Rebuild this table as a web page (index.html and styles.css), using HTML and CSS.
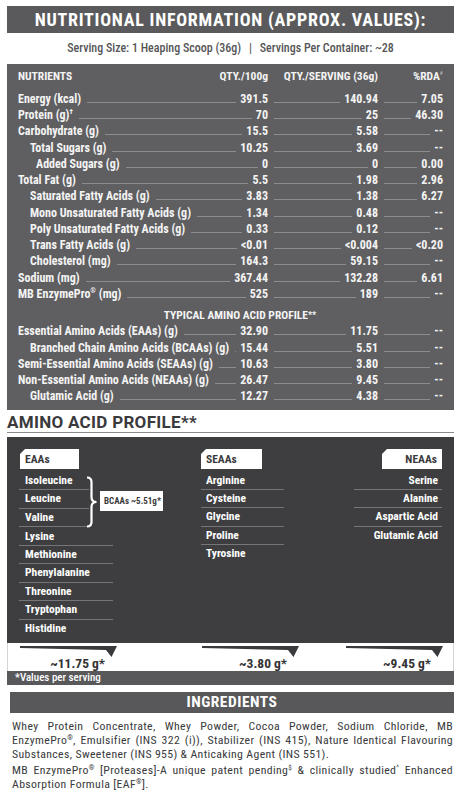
FILE: index.html
```html
<!DOCTYPE html>
<html>
<head>
<meta charset="utf-8">
<link rel="stylesheet" href="styles.css">
</head>
<body>
<div class="page">
  <h1 class="title-bar">NUTRITIONAL INFORMATION (APPROX. VALUES):</h1>
  <p class="serving">Serving Size: 1 Heaping Scoop (36g) <span class="sep">|</span> Servings Per Container: ~28</p>

  <section class="nut">
    <div class="nut-head">
      <span class="h1c">NUTRIENTS</span><span class="h1c r">QTY./100g</span>
      <span class="r">QTY./SERVING (36g)</span>
      <span class="r">%RDA<sup class="hash">#</sup></span>
    </div>
    <div class="row"><div class="cell"><span class="lbl">Energy (kcal)</span><i class="lead"></i><span class="val">391.5</span></div><div class="cell"><i class="lead"></i><span class="val">140.94</span></div><div class="cell"><i class="lead"></i><span class="val">7.05</span></div></div>
    <div class="row"><div class="cell"><span class="lbl">Protein (g)<sup class="dag">†</sup></span><i class="lead"></i><span class="val">70</span></div><div class="cell"><i class="lead"></i><span class="val">25</span></div><div class="cell"><i class="lead"></i><span class="val">46.30</span></div></div>
    <div class="row"><div class="cell"><span class="lbl">Carbohydrate (g)</span><i class="lead"></i><span class="val">15.5</span></div><div class="cell"><i class="lead"></i><span class="val">5.58</span></div><div class="cell"><i class="lead"></i><span class="val">--</span></div></div>
    <div class="row"><div class="cell"><span class="lbl i1">Total Sugars (g)</span><i class="lead"></i><span class="val">10.25</span></div><div class="cell"><i class="lead"></i><span class="val">3.69</span></div><div class="cell"><i class="lead"></i><span class="val">--</span></div></div>
    <div class="row"><div class="cell"><span class="lbl i2">Added Sugars (g)</span><i class="lead"></i><span class="val">0</span></div><div class="cell"><i class="lead"></i><span class="val">0</span></div><div class="cell"><i class="lead"></i><span class="val">0.00</span></div></div>
    <div class="row"><div class="cell"><span class="lbl">Total Fat (g)</span><i class="lead"></i><span class="val">5.5</span></div><div class="cell"><i class="lead"></i><span class="val">1.98</span></div><div class="cell"><i class="lead"></i><span class="val">2.96</span></div></div>
    <div class="row"><div class="cell"><span class="lbl i1">Saturated Fatty Acids (g)</span><i class="lead"></i><span class="val">3.83</span></div><div class="cell"><i class="lead"></i><span class="val">1.38</span></div><div class="cell"><i class="lead"></i><span class="val">6.27</span></div></div>
    <div class="row"><div class="cell"><span class="lbl i1">Mono Unsaturated Fatty Acids (g)</span><i class="lead"></i><span class="val">1.34</span></div><div class="cell"><i class="lead"></i><span class="val">0.48</span></div><div class="cell"><i class="lead"></i><span class="val">--</span></div></div>
    <div class="row"><div class="cell"><span class="lbl i1">Poly Unsaturated Fatty Acids (g)</span><i class="lead"></i><span class="val">0.33</span></div><div class="cell"><i class="lead"></i><span class="val">0.12</span></div><div class="cell"><i class="lead"></i><span class="val">--</span></div></div>
    <div class="row"><div class="cell"><span class="lbl i1">Trans Fatty Acids (g)</span><i class="lead"></i><span class="val">&lt;0.01</span></div><div class="cell"><i class="lead"></i><span class="val">&lt;0.004</span></div><div class="cell"><i class="lead"></i><span class="val">&lt;0.20</span></div></div>
    <div class="row"><div class="cell"><span class="lbl i1">Cholesterol (mg)</span><i class="lead"></i><span class="val">164.3</span></div><div class="cell"><i class="lead"></i><span class="val">59.15</span></div><div class="cell"><i class="lead"></i><span class="val">--</span></div></div>
    <div class="row"><div class="cell"><span class="lbl">Sodium (mg)</span><i class="lead"></i><span class="val">367.44</span></div><div class="cell"><i class="lead"></i><span class="val">132.28</span></div><div class="cell"><i class="lead"></i><span class="val">6.61</span></div></div>
    <div class="row"><div class="cell"><span class="lbl">MB EnzymePro<sup class="reg">®</sup> (mg)</span><i class="lead"></i><span class="val">525</span></div><div class="cell"><i class="lead"></i><span class="val">189</span></div><div class="cell"><i class="lead"></i><span class="val">--</span></div></div>

    <div class="sub-head">TYPICAL AMINO ACID PROFILE<span class="stars">**</span></div>

    <div class="row"><div class="cell"><span class="lbl">Essential Amino Acids (EAAs) (g)</span><i class="lead"></i><span class="val">32.90</span></div><div class="cell"><i class="lead"></i><span class="val">11.75</span></div><div class="cell"><i class="lead"></i><span class="val">--</span></div></div>
    <div class="row"><div class="cell"><span class="lbl i1">Branched Chain Amino Acids (BCAAs) (g)</span><i class="lead"></i><span class="val">15.44</span></div><div class="cell"><i class="lead"></i><span class="val">5.51</span></div><div class="cell"><i class="lead"></i><span class="val">--</span></div></div>
    <div class="row"><div class="cell"><span class="lbl">Semi-Essential Amino Acids (SEAAs) (g)</span><i class="lead"></i><span class="val">10.63</span></div><div class="cell"><i class="lead"></i><span class="val">3.80</span></div><div class="cell"><i class="lead"></i><span class="val">--</span></div></div>
    <div class="row"><div class="cell"><span class="lbl">Non-Essential Amino Acids (NEAAs) (g)</span><i class="lead"></i><span class="val">26.47</span></div><div class="cell"><i class="lead"></i><span class="val">9.45</span></div><div class="cell"><i class="lead"></i><span class="val">--</span></div></div>
    <div class="row"><div class="cell"><span class="lbl i1">Glutamic Acid (g)</span><i class="lead"></i><span class="val">12.27</span></div><div class="cell"><i class="lead"></i><span class="val">4.38</span></div><div class="cell"><i class="lead"></i><span class="val">--</span></div></div>
  </section>

  <h2 class="aa-title">AMINO ACID PROFILE**</h2>

  <section class="aa-panel">
    <div class="col col-eaa">
      <div class="tag">EAAs</div>
      <div class="bcaa">
        <ul class="list short">
          <li>Isoleucine</li>
          <li>Leucine</li>
          <li>Valine</li>
        </ul>
        <svg class="brace" width="12" height="52" viewBox="0 0 12 52"><path d="M1 1.5 Q5.5 1.5 5.5 6 L5.5 21 Q5.5 26 10.5 26 Q5.5 26 5.5 31 L5.5 46 Q5.5 50.5 1 50.5" fill="none" stroke="#fff" stroke-width="2.2"/></svg>
        <div class="bcaa-tag">BCAAs ~5.51g*</div>
      </div>
      <ul class="list main">
        <li>Lysine</li>
        <li>Methionine</li>
        <li>Phenylalanine</li>
        <li>Threonine</li>
        <li>Tryptophan</li>
        <li>Histidine</li>
      </ul>
    </div>
    <div class="col col-seaa">
      <div class="tag">SEAAs</div>
      <ul class="list main">
        <li>Arginine</li>
        <li>Cysteine</li>
        <li>Glycine</li>
        <li>Proline</li>
        <li>Tyrosine</li>
      </ul>
    </div>
    <div class="col col-neaa">
      <div class="tag">NEAAs</div>
      <ul class="list main">
        <li>Serine</li>
        <li>Alanine</li>
        <li>Aspartic Acid</li>
        <li>Glutamic Acid</li>
      </ul>
    </div>
  </section>

  <div class="totals">
    <div class="total">
      <svg class="wedge" width="97" height="11" viewBox="0 0 97 11"><polygon points="0,0 97,0 91.5,11 86,4 0,2" fill="#3a3a3c"/></svg>
      <span class="amt">~11.75 g*</span>
    </div>
    <div class="total">
      <svg class="wedge" width="97" height="11" viewBox="0 0 97 11"><polygon points="0,0 97,0 91.5,11 86,4 0,2" fill="#3a3a3c"/></svg>
      <span class="amt">~3.80 g*</span>
    </div>
    <div class="total">
      <svg class="wedge" width="97" height="11" viewBox="0 0 97 11"><polygon points="0,0 97,0 91.5,11 86,4 0,2" fill="#3a3a3c"/></svg>
      <span class="amt">~9.45 g*</span>
    </div>
  </div>
  <div class="aa-note">*Values per serving</div>

  <section class="ing">
    <h2 class="ing-head">INGREDIENTS</h2>
    <div class="ing-text">
      <p><span class="ln">Whey Protein Concentrate, Whey Powder, Cocoa Powder, Sodium Chloride, MB</span><span class="ln">EnzymePro<sup class="reg">®</sup>, Emulsifier (INS 322 (i)), Stabilizer (INS 415), Nature Identical Flavouring</span><span class="ln last">Substances, Sweetener (INS 955) &amp; Anticaking Agent (INS 551).</span></p>
      <p><span class="ln">MB EnzymePro<sup class="reg">®</sup> [Proteases]-A unique patent pending<sup class="reg">$</sup> &amp; clinically studied<sup class="reg">^</sup> Enhanced</span><span class="ln last">Absorption Formula [EAF<sup class="reg">®</sup>].</span></p>
    </div>
  </section>
</div>
</body>
</html>
```
FILE: styles.css
```css
* { box-sizing: border-box; margin: 0; padding: 0; }
body { background: #fff; font-family: Roboto, "Noto Sans", sans-serif; width: 461px; }
.page { padding: 6px 7px 0; }

.title-bar { height: 27px; background: #5a5a5c; color: #fff; font-size: 18px; font-weight: 700; text-align: center; line-height: 27px; font-stretch: 75%; letter-spacing: 0.75px; }
.serving { height: 31px; line-height: 31px; text-align: center; font-size: 12px; font-weight: 500; color: #555557; font-stretch: 75%; }
.serving .sep { margin: 0 5px; }

.nut { background: #5f5f61; color: #f4f4f4; padding: 4px 11px 0; height: 346px; font-weight: 700; font-size: 12px; font-stretch: 75%; }
.nut-head { display: grid; grid-template-columns: 190px 60px 110px 65px; height: 16px; line-height: 16px; margin-bottom: 6.9px; font-size: 11.5px; }
.nut-head .r { text-align: right; }
.hash { font-size: 6px; color: #aaa; vertical-align: top; line-height: 10px; }
.row { display: grid; grid-template-columns: 250px 110px 65px; height: 16.25px; line-height: 16.25px; }
.cell { display: flex; align-items: baseline; white-space: nowrap; }
.lbl.i1 { padding-left: 12px; }
.lbl.i2 { padding-left: 18px; }
.lead { flex: 1; height: 0; border-bottom: 1px solid #8c8c8e; margin: 0 4px 0 6px; }
.val { text-align: right; }
.dag, .reg { font-size: 60%; vertical-align: top; line-height: 1; position: relative; top: 1px; }
.sub-head { height: 16.25px; line-height: 16.25px; margin-top: 5px; text-align: center; padding-left: 19px; font-size: 11.5px; }
.stars { font-size: 80%; vertical-align: top; }

.aa-title { height: 23px; line-height: 24px; font-size: 17px; font-weight: 700; color: #3a3a3c; border-bottom: 1px solid #8a8a8a; margin-bottom: 4px; letter-spacing: 0.3px; }

.aa-panel { background: #3e3e40; height: 206px; padding: 12px 12px 0; display: grid; grid-template-columns: 182px 144px 97px; color: #fff; font-weight: 700; font-size: 11.5px; font-stretch: 75%; }
.tag { height: 20px; background: #fff; color: #3a3a3c; font-size: 11.5px; line-height: 20px; padding-left: 5px; margin-bottom: 2.6px; clip-path: polygon(5px 0, 100% 0, 100% 100%, 0 100%, 0 5px); }
.col-eaa .tag { width: 59px; margin-left: 1px; }
.col-seaa .tag { width: 61px; }
.col-neaa .tag { width: 60px; margin-left: auto; text-align: right; padding-right: 5px; }
.list { list-style: none; }
.list li { height: 18.4px; line-height: 17.4px; border-bottom: 1px solid #76767a; padding-left: 6px; }
.list.main li:last-child { border-bottom: none; }
.col-eaa .list.main { width: 94px; }
.col-seaa .list { width: 83px; }
.col-seaa .list li { padding-left: 5px; }
.col-neaa .list { width: 88px; margin-left: auto; }
.col-neaa .list li { text-align: right; padding: 0 4px 0 0; }
.bcaa { display: flex; align-items: center; }
.bcaa .list { width: 70px; }
.brace { display: block; margin-left: -3px; margin-top: 4px; }
.bcaa-tag { width: 63px; height: 20px; margin-left: 2px; margin-top: 3px; background: #fff; color: #3a3a3c; font-size: 9px; line-height: 20px; padding-left: 4px; white-space: nowrap; }

.totals { height: 28px; padding: 3px 12px 0; display: grid; grid-template-columns: 182px 144px 97px; border-left: 1px solid #d4d4d4; border-right: 1px solid #d4d4d4; }
.total { width: 97px; display: flex; flex-direction: column; }
.wedge { display: block; }
.amt { display: block; text-align: right; padding-right: 12px; font-size: 13.5px; line-height: 14px; margin-top: -1px; font-weight: 700; color: #333335; font-stretch: 75%; }
.aa-note { height: 14px; background: #59595b; color: #fff; font-size: 11px; line-height: 14px; padding-left: 8px; font-weight: 500; font-stretch: 75%; margin-bottom: 7px; }

.ing { margin-left: 3px; }
.ing-head { height: 21px; background: #58585a; color: #fff; font-size: 15.5px; font-weight: 700; text-align: center; line-height: 21px; font-stretch: 85%; letter-spacing: 0.5px; }
.ing-text { padding: 6px 1px 0 2px; font-size: 11.8px; line-height: 14px; color: #3a3a3c; font-stretch: 75%; letter-spacing: 0.35px; }
.ing-text p + p { margin-top: 2px; }
.ln { display: block; text-align: justify; text-align-last: justify; white-space: nowrap; }
.ln.last { text-align-last: left; }
```
